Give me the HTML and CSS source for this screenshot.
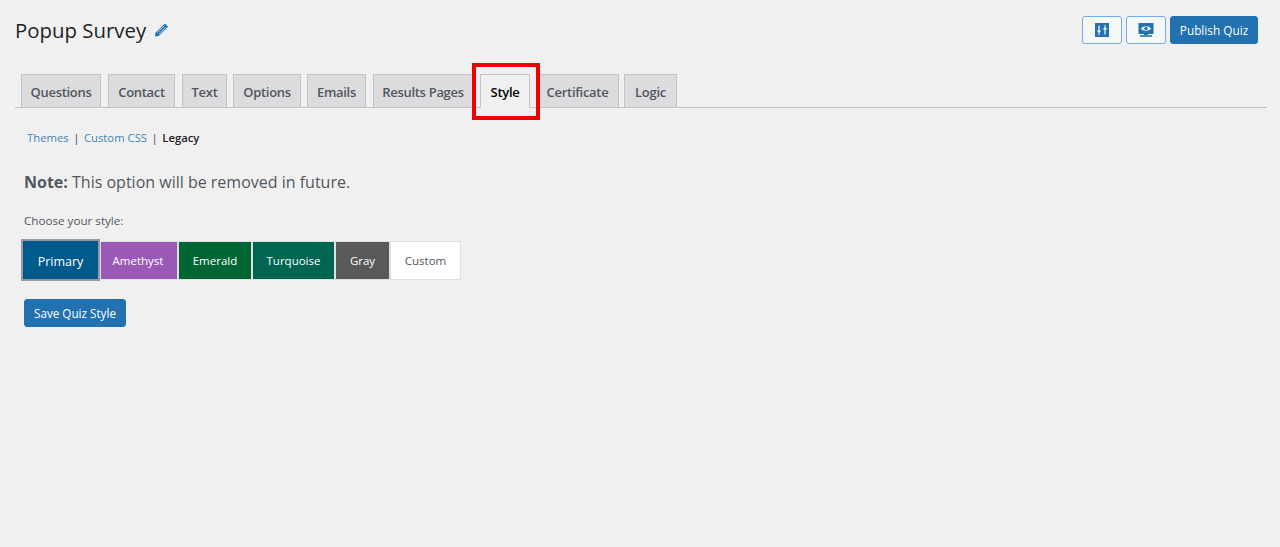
FILE: index.html
```html
<!DOCTYPE html>
<html lang="en">
<head>
<meta charset="utf-8">
<title>Popup Survey</title>
<link rel="stylesheet" href="styles.css">
</head>
<body>
<div class="page">
  <header class="top">
    <h1 class="title">Popup Survey
      <svg class="edit" viewBox="0 0 16 16" width="15" height="16"><path d="M11.6 1l3.4 3.4L5 14.4 1 15l.6-4z" fill="#2271b1"/><path d="M3.6 10.8l7.2-7.2M5.4 12.4l7.2-7.2" stroke="#e8eef4" stroke-width=".9" fill="none"/></svg>
    </h1>
    <div class="actions">
      <button class="btn btn-outline" aria-label="Settings">
        <svg viewBox="0 0 16 16" width="16" height="16"><rect x="1" y="1" width="14" height="14" fill="#2271b1"/><path d="M5 3.5v6M5 11.5v1.5M11 12.5v-6M11 4.5V3" stroke="#fff" stroke-width="1.2" fill="none"/><path d="M2.9 8.6h4.2L5 11.4zM8.9 7.4h4.2L11 4.6z" fill="#fff"/></svg>
      </button>
      <button class="btn btn-outline" aria-label="Preview">
        <svg viewBox="0 0 16 16" width="16" height="16"><rect x="0.5" y="1" width="15" height="11" fill="#2271b1"/><path d="M3 6.5C5 3.6 11 3.6 13 6.5 11 9.4 5 9.4 3 6.5z" fill="#fff"/><circle cx="8" cy="6.5" r="1.7" fill="#2271b1"/><path d="M2 14h12" stroke="#2271b1" stroke-width="1.6"/><path d="M6 12.5h4" stroke="#2271b1"/></svg>
      </button>
      <button class="btn btn-primary">Publish Quiz</button>
    </div>
  </header>

  <nav class="tabs">
    <a class="tab tab-q">Questions</a>
    <a class="tab tab-c">Contact</a>
    <a class="tab tab-t">Text</a>
    <a class="tab tab-o">Options</a>
    <a class="tab tab-e">Emails</a>
    <a class="tab tab-r">Results Pages</a>
    <a class="tab tab-s active">Style</a>
    <a class="tab tab-x">Certificate</a>
    <a class="tab tab-l">Logic</a>
    <span class="highlight"></span>
  </nav>

  <main class="content">
    <div class="subnav"><a>Themes</a><span class="sep">|</span><a>Custom CSS</a><span class="sep">|</span><strong>Legacy</strong></div>
    <p class="note"><strong>Note:</strong> This option will be removed in future.</p>
    <p class="choose">Choose your style:</p>
    <div class="styles">
      <button class="sw sw-primary">Primary</button>
      <button class="sw sw-amethyst">Amethyst</button>
      <button class="sw sw-emerald">Emerald</button>
      <button class="sw sw-turquoise">Turquoise</button>
      <button class="sw sw-gray">Gray</button>
      <button class="sw sw-custom">Custom</button>
    </div>
    <button class="btn btn-primary btn-save">Save Quiz Style</button>
  </main>
</div>
</body>
</html>
```
FILE: styles.css
```css
* { box-sizing: border-box; }
html, body { margin: 0; height: 100%; }
body {
  background: #f0f0f0;
  color: #3c434a;
  font-family: "Open Sans", "Noto Sans", "Liberation Sans", sans-serif;
  font-size: 13px;
  overflow: hidden;
}
.page { padding: 16px 13px 0 15px; }

.top { display: flex; justify-content: space-between; align-items: flex-start; height: 58px; padding-right: 9px; }
.title {
  margin: 0;
  font-size: 20.4px;
  line-height: 28px;
  font-weight: 400;
  color: #1d2327;
  display: flex;
  align-items: center;
  gap: 8px;
}
.edit { display: block; }
.actions { display: flex; gap: 4px; }
.btn {
  font: inherit;
  font-size: 11.8px;
  height: 28px;
  border-radius: 3px;
  cursor: pointer;
  display: flex;
  align-items: center;
  justify-content: center;
  white-space: nowrap;
}
.btn-outline { width: 40px; padding: 0; background: #f6f7f7; border: 1px solid #72aee6; }
.btn-primary { width: 88px; padding: 0; background: #2271b1; border: 1px solid #2271b1; color: #fff; }

.tabs {
  position: relative;
  display: flex;
  height: 34px;
  padding-left: 6px;
  border-bottom: 1px solid #c3c4c7;
}
.tab {
  height: 34px;
  margin-right: 7px;
  padding-top: 2px;
  display: flex;
  align-items: center;
  justify-content: center;
  background: #dcdcde;
  border: 1px solid #c3c4c7;
  font-size: 13px;
  letter-spacing: -.3px;
  font-weight: 600;
  color: #50575e;
}
.tab-q { width: 80px; }
.tab-c { width: 67px; }
.tab-t { width: 45px; margin-right: 6px; }
.tab-o { width: 68px; margin-right: 6px; }
.tab-e { width: 59px; }
.tab-r { width: 100px; }
.tab-s { width: 50px; margin-right: 6px; }
.tab-x { width: 83px; margin-right: 5px; }
.tab-l { width: 53px; }
.tab.active { background: #f0f0f0; border-bottom-color: #f0f0f0; color: #000; }
.highlight {
  position: absolute;
  left: 457px;
  top: -11px;
  width: 68px;
  height: 57px;
  border: 4px solid #f00000;
}

.content { padding: 22px 0 0 9px; }
.subnav { display: flex; align-items: center; font-size: 11.3px; line-height: 16px; margin-left: 3px; }
.subnav a { color: #2271b1; opacity: .85; }
.subnav strong { color: #1d2327; font-weight: 600; }
.sep { margin: 0 4.5px; }
.note { margin: 25px 0 0; font-size: 16px; line-height: 22px; color: #50575e; }
.note strong { font-weight: 700; }
.choose { margin: 19px 0 0; font-size: 11.65px; line-height: 18px; color: #50575e; }
.styles { display: flex; align-items: center; margin: 9px 0 0 -3px; }
.sw {
  font: inherit;
  font-size: 11.5px;
  height: 39px;
  padding: 0;
  color: #fff;
  border: 1px solid #e0e0e0;
  cursor: pointer;
}
.sw-primary { width: 79px; height: 42px; padding-top: 2px; font-size: 12.5px; background: #005a8c; border: 2px solid #9a98a4; }
.sw-amethyst { width: 78px; padding-right: 2px; background: #9b59b6; }
.sw-emerald { width: 74px; background: #006633; }
.sw-turquoise { width: 83px; background: #006652; }
.sw-gray { width: 55px; background: #595959; }
.sw-custom { width: 71px; background: #fff; color: #50575e; }
.btn-save { width: 102px; height: 28px; margin-top: 18px; font-size: 11.7px; }
```
